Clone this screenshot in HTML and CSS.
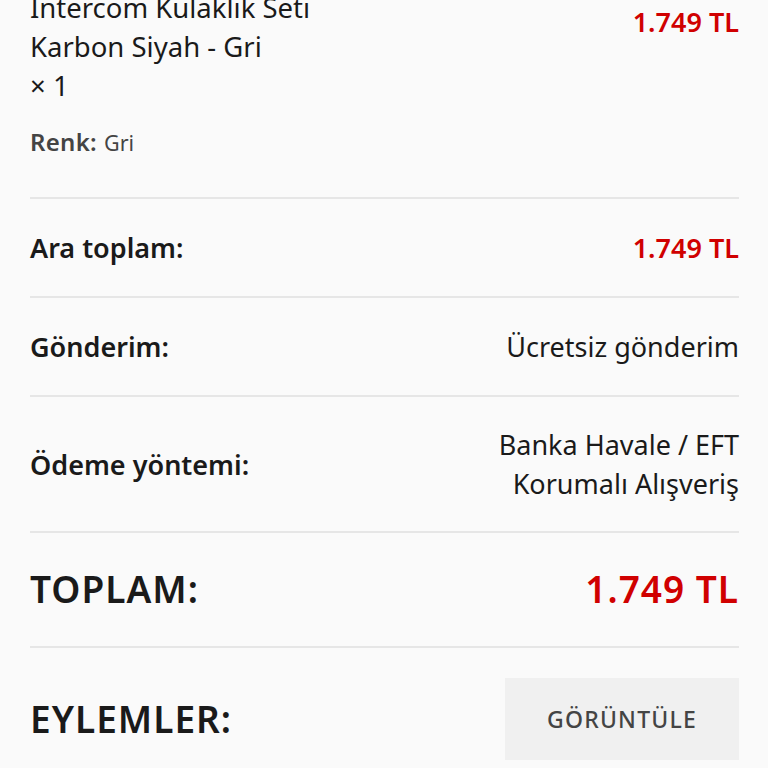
FILE: index.html
```html
<!DOCTYPE html>
<html lang="tr">
<head>
<meta charset="utf-8">
<link rel="stylesheet" href="styles.css">
</head>
<body>
<div class="page">
  <div class="row product">
    <div class="prod-info">
      <div class="prod-name">Intercom Kulaklık Seti<br>Karbon Siyah - Gri<br>× 1</div>
      <div class="prod-meta"><span class="meta-key">Renk:</span> <span class="meta-val">Gri</span></div>
    </div>
    <div class="price prod-price">1.749 TL</div>
  </div>
  <div class="row">
    <div class="label">Ara toplam:</div>
    <div class="price">1.749 TL</div>
  </div>
  <div class="row">
    <div class="label">Gönderim:</div>
    <div class="value">Ücretsiz gönderim</div>
  </div>
  <div class="row pay">
    <div class="label">Ödeme yöntemi:</div>
    <div class="value">Banka Havale / EFT<br>Korumalı Alışveriş</div>
  </div>
  <div class="row total">
    <div class="label big">TOPLAM:</div>
    <div class="price big">1.749 TL</div>
  </div>
  <div class="row actions">
    <div class="label big">EYLEMLER:</div>
    <button class="btn">GÖRÜNTÜLE</button>
  </div>
</div>
</body>
</html>
```
FILE: styles.css
```css
html, body {
  margin: 0;
  padding: 0;
  background: #fafafa;
}
body {
  font-family: "Noto Sans", "Open Sans", sans-serif;
  color: #1a1a1a;
  overflow: hidden;
}
.page {
  margin: -12px 29px 0 30px;
}
.row {
  display: flex;
  justify-content: space-between;
  align-items: center;
  padding: 29px 0;
  border-bottom: 2px solid #e6e6e6;
  font-size: 27px;
  line-height: 39px;
}
.row.product {
  align-items: flex-start;
  padding: 0 0 37px 0;
}
.prod-name {
  font-size: 27.5px;
  line-height: 39px;
  color: #1a1a1a;
}
.prod-meta {
  margin-top: 18px;
  line-height: 35px;
}
.meta-key {
  font-size: 24px;
  font-weight: 600;
  color: #444;
  letter-spacing: 0.3px;
}
.meta-val {
  font-size: 21.5px;
  color: #444;
}
.prod-price {
  margin-top: 14px;
}
.label {
  font-weight: 600;
  color: #1a1a1a;
}
.price {
  font-weight: 600;
  color: #d00000;
}
.value {
  text-align: right;
  color: #1a1a1a;
}
.row.pay {
  padding: 28px 0;
}
.row.total {
  padding: 29px 0 30px;
}
.big {
  font-size: 37px;
  line-height: 54px;
  letter-spacing: 1px;
}
.row.actions {
  border-bottom: none;
  padding: 30px 0;
}
.btn {
  width: 234px;
  height: 82px;
  border: none;
  background: #f0f0f0;
  color: #444;
  font-family: "Noto Sans", sans-serif;
  font-size: 23px;
  font-weight: 500;
  letter-spacing: 1.2px;
}
```
